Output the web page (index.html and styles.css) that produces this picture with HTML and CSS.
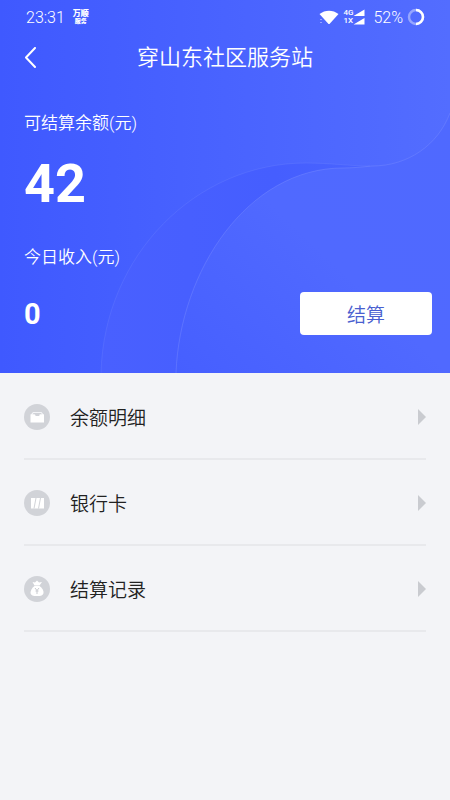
FILE: index.html
```
<!DOCTYPE html>
<html lang="zh-CN">
<head>
<meta charset="utf-8">
<meta name="viewport" content="width=device-width, initial-scale=1">
<title>穿山东社区服务站</title>
<link rel="stylesheet" href="styles.css">
</head>
<body>

<div class="hero">
  <!-- background waves -->
  <svg class="waves" viewBox="0 0 450 373" preserveAspectRatio="none" aria-hidden="true">
    <defs>
      <linearGradient id="outer" x1="0" y1="0" x2="1" y2="0">
        <stop offset="0" stop-color="#4960ff"/>
        <stop offset="0.5" stop-color="#455eff"/>
        <stop offset="1" stop-color="#4d69ff"/>
      </linearGradient>
      <linearGradient id="inner" x1="0" y1="1" x2="1" y2="0">
        <stop offset="0" stop-color="#465fff"/>
        <stop offset="0.5" stop-color="#5069ff"/>
        <stop offset="1" stop-color="#4f69ff"/>
      </linearGradient>
    </defs>
    <path d="M101 373C104 255 196 163 306 163C330 163 350 166 370 166C408 166 438 145 450 113V373Z" fill="url(#outer)"/>
    <path d="M176 373C180 270 248 168 343 168C352 168 362 167 372 166C408 166 438 145 450 113V373Z" fill="url(#inner)"/>
    <path d="M101 373C104 255 196 163 306 163C330 163 350 166 370 166" fill="none" stroke="#8496ff" stroke-opacity="0.2"/>
    <path d="M176 373C180 270 248 168 343 168C352 168 362 167 372 166C408 166 438 145 450 113" fill="none" stroke="#8496ff" stroke-opacity="0.35"/>
  </svg>

  <div class="statusbar">
    <span class="time">23:31</span>
    <span class="carrier"><b>万顺</b><b class="small">服务</b></span>
    <span class="status-right">
      <svg width="20" height="16" viewBox="0 0 20 16" aria-hidden="true">
        <path d="M0.500 5C6 0.500 14 0.500 19.500 5L10.500 15H9.500Z" fill="#fff"/>
        <path d="M1 11L2 10L3 11M1 13L2 14L3 13" fill="none" stroke="#fff" stroke-opacity="0.4"/>
      </svg>
      <span class="network"><span>4G</span><span>1X</span></span>
      <svg width="12" height="16" viewBox="0 0 12 16" aria-hidden="true">
        <path d="M11.500 0.500V7H0.500ZM11.500 9V15.500H0.500Z" fill="#fff"/>
      </svg>
      <span class="percent">52%</span>
      <svg width="18" height="18" viewBox="0 0 18 18" aria-hidden="true">
        <circle cx="9" cy="9" r="7" fill="none" stroke="#fff" stroke-opacity="0.4" stroke-width="2.500"/>
        <path d="M9 2A7 7 0 0 1 9 16" fill="none" stroke="#fff" stroke-width="2.500"/>
      </svg>
    </span>
  </div>

  <div class="navbar">
    <button class="back" type="button" aria-label="返回">
      <svg width="14" height="22" viewBox="0 0 14 22" aria-hidden="true">
        <path d="M11 1L2 10.500L11 20" fill="none" stroke="#fff" stroke-width="2" stroke-linecap="round" stroke-linejoin="round"/>
      </svg>
    </button>
    <h1>穿山东社区服务站</h1>
  </div>

  <div class="balance">
    <p class="label">可结算余额(元)</p>
    <p class="total">42</p>
    <p class="label">今日收入(元)</p>
    <div class="today">
      <span class="income">0</span>
      <button class="settle" type="button">结算</button>
    </div>
  </div>
</div>

<ul class="menu">
  <li><a href="#detail">
    <svg class="icon" viewBox="0 0 26 26" aria-hidden="true">
      <circle cx="13" cy="13" r="13" fill="#d1d3d8"/>
      <path d="M9 8H17.500L20 11H6.500Z" fill="#f3f4f7"/>
      <path d="M8.500 10.500L9.500 9H17L18 10.500H15.500L14.500 12H12L11 10.500Z" fill="#d1d3d8"/>
      <path d="M6.500 10.500H10.500L12 12H15L16 10.500H20V18.500H6.500Z" fill="#fff"/>
    </svg>
    <span>余额明细</span>
    <svg class="arrow" viewBox="0 0 8 16" aria-hidden="true"><path d="M0 0L8 8L0 16Z" fill="#c9cbd0"/></svg>
  </a></li>
  <li><a href="#card">
    <svg class="icon" viewBox="0 0 26 26" aria-hidden="true">
      <circle cx="13" cy="13" r="13" fill="#d1d3d8"/>
      <path d="M7 8H20V18.500H7Z" fill="#fff"/>
      <path d="M12 8L10 18.500M16.500 8L14.500 18.500" stroke="#d1d3d8" stroke-width="1"/>
    </svg>
    <span>银行卡</span>
    <svg class="arrow" viewBox="0 0 8 16" aria-hidden="true"><path d="M0 0L8 8L0 16Z" fill="#c9cbd0"/></svg>
  </a></li>
  <li><a href="#record">
    <svg class="icon" viewBox="0 0 26 26" aria-hidden="true">
      <circle cx="13" cy="13" r="13" fill="#d1d3d8"/>
      <path d="M8.500 6L11 6.500L13 4.500L15 6.500L18 6L15.500 9.500H10.500Z" fill="#fff"/>
      <path d="M10.500 10H15.500C18 12 20 14.500 19.500 17C19 19.500 17 20 13 20C9 20 7 19.500 6.500 17C6.500 14.500 8 12 10.500 10Z" fill="#fff"/>
      <path d="M11 12L13 14.500L15 12M13 14.500V18M11.500 15H14.500" fill="none" stroke="#c9cbd0"/>
    </svg>
    <span>结算记录</span>
    <svg class="arrow" viewBox="0 0 8 16" aria-hidden="true"><path d="M0 0L8 8L0 16Z" fill="#c9cbd0"/></svg>
  </a></li>
</ul>

</body>
</html>
```
FILE: styles.css
```
* {
    box-sizing: border-box;
}

body {
    margin: 0;
    background-color: #f3f4f7;
    color: #222;
    font-family: Roboto, "Noto Sans CJK SC", sans-serif;
    font-weight: 350;
}

h1, p, ul {
    margin: 0;
    padding: 0;
    font-weight: inherit;
}

button {
    border: none;
    padding: 0;
    font-family: inherit;
    font-weight: inherit;
    cursor: pointer;
}

svg {
    display: block;
    flex: none;
}

/* Blue header area */
.hero {
    position: relative;
    background: linear-gradient(to right, #3f59ff, #536dff);
    color: #fff;
    padding-bottom: 38px;
}

.waves {
    position: absolute;
    top: 0;
    left: 0;
    width: 100%;
    height: 100%;
}

.statusbar, .navbar, .balance {
    position: relative;
}

/* Status bar */
.statusbar {
    display: flex;
    align-items: center;
    height: 34px;
    padding: 0 25px 0 26px;
    font-size: 16px;
}

.carrier {
    display: flex;
    flex-direction: column;
    align-items: center;
    margin-left: 8px;
    font-size: 8px;
    line-height: 8px;
}

.carrier b {
    font-weight: 900;
}

.carrier .small {
    font-size: 6px;
    line-height: 6px;
}

.status-right {
    display: flex;
    align-items: center;
    margin-left: auto;
}

.network {
    display: flex;
    flex-direction: column;
    margin-left: 4px;
    font-size: 8px;
    line-height: 8px;
    font-weight: 500;
}

.percent {
    margin: 0 4px 0 8px;
}

/* Title row */
.navbar {
    display: grid;
    grid-template-columns: 24px 1fr 24px;
    align-items: center;
    height: 48px;
    padding: 0 24px;
}

.navbar h1 {
    font-size: 22px;
    line-height: 32px;
    text-align: center;
}

.back {
    background: none;
}

/* Amounts */
.balance {
    padding: 28px 18px 0 24px;
}

.label {
    font-size: 17px;
    line-height: 26px;
}

.total {
    margin: 10px 0 22px;
    font-size: 54px;
    line-height: 76px;
    font-weight: bold;
}

.today {
    display: flex;
    align-items: center;
    justify-content: space-between;
    margin-top: 22px;
}

.income {
    font-size: 29px;
    font-weight: bold;
}

.settle {
    width: 132px;
    height: 43px;
    border-radius: 4px;
    background-color: #fff;
    color: #4a5fd0;
    font-size: 19px;
}

/* Menu list */
.menu {
    list-style: none;
    padding: 1px 24px;
}

.menu li {
    border-bottom: 2px solid #e8e9ec;
}

.menu a {
    display: flex;
    align-items: center;
    height: 84px;
    padding-top: 2px;
    color: inherit;
    font-size: 19px;
    text-decoration: none;
}

.menu span {
    padding-bottom: 2px;
}

.icon {
    width: 26px;
    height: 26px;
    margin-right: 20px;
}

.arrow {
    width: 8px;
    height: 16px;
    margin-left: auto;
}
```
